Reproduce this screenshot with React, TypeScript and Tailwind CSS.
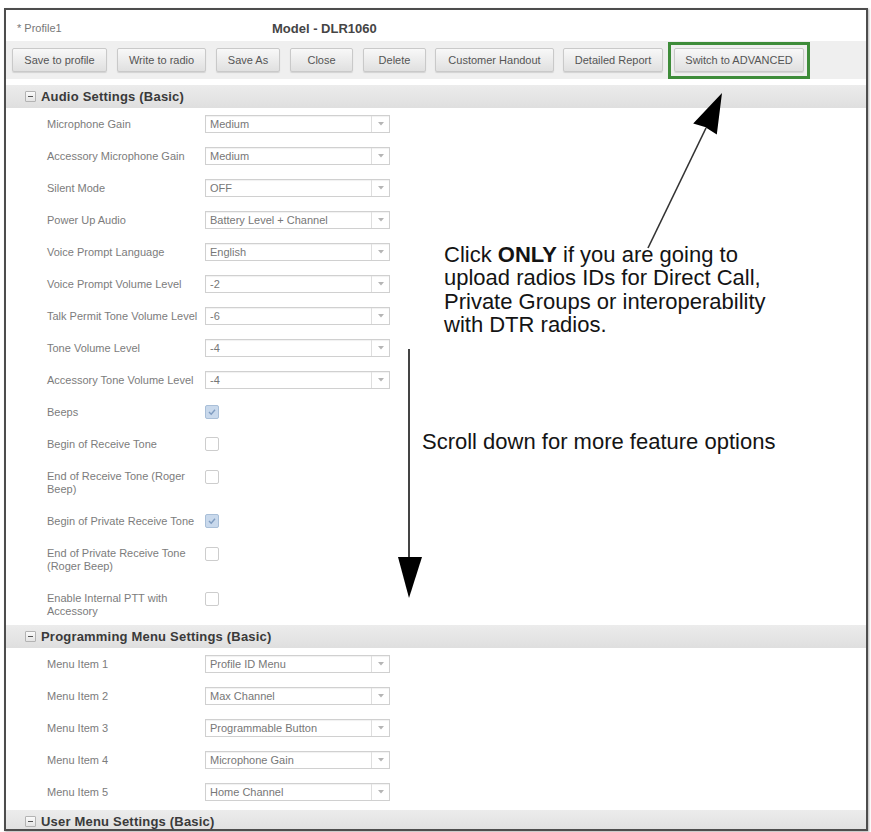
import React from "react";

type BtnProps = { label: string; cls: string };

function Btn({ label, cls }: BtnProps) {
  return (
    <div
      className={
        "h-[24px] flex items-center justify-center whitespace-nowrap border border-[#c9c9c9] rounded-[2px] bg-gradient-to-b from-[#f8f8f8] to-[#e0e0e0] text-[11px] text-[#555] shadow-[0_1px_1px_rgba(0,0,0,0.12)] " +
        cls
      }
    >
      {label}
    </div>
  );
}

function Select({ value }: { value: string }) {
  return (
    <div className="w-[185px] h-[18px] border border-[#d0d0d0] bg-white flex shadow-[inset_0_1px_1px_rgba(0,0,0,0.06)]">
      <div className="flex-1 pl-[4px] text-[11px] leading-[16px] text-[#777] whitespace-nowrap overflow-hidden">
        {value}
      </div>
      <div className="w-[18px] border-l border-[#dedede] flex items-center justify-center">
        <svg width="6" height="4" viewBox="0 0 6 4">
          <path d="M0 0 L6 0 L3 3.5 Z" fill="#b5b5b5" />
        </svg>
      </div>
    </div>
  );
}

function Check({ checked }: { checked?: boolean }) {
  return checked ? (
    <div className="w-[14px] h-[14px] border border-[#a9bfd8] rounded-[2px] bg-[#c9d9ec] flex items-center justify-center">
      <svg width="10" height="10" viewBox="0 0 10 10">
        <path d="M2 5 L4.2 7.2 L8 2.8" stroke="#7f9cc0" strokeWidth="1.4" fill="none" />
      </svg>
    </div>
  ) : (
    <div className="w-[14px] h-[14px] border border-[#cdcdcd] rounded-[2px] bg-white" />
  );
}

function Header({ title }: { title: string }) {
  return (
    <div className="h-[23px] shrink-0 flex items-center pl-[19px] bg-gradient-to-b from-[#ececec] to-[#dfdfdf]">
      <div className="w-[11px] h-[11px] border border-[#b3b3b3] rounded-[1px] bg-gradient-to-b from-[#fafafa] to-[#e4e4e4] flex items-center justify-center">
        <div className="w-[5px] h-[1.5px] bg-[#555]" />
      </div>
      <div className="ml-[5px] text-[13px] font-bold text-[#3a3a3a] tracking-[0.2px] whitespace-nowrap">
        {title}
      </div>
    </div>
  );
}

function SelectRow({ label, value }: { label: string; value: string }) {
  return (
    <div className="h-[32px] shrink-0 flex items-center pl-[41px]">
      <div className="w-[158px] text-[11px] leading-[13px] text-[#7c7c7c] whitespace-nowrap">{label}</div>
      <Select value={value} />
    </div>
  );
}

function CheckRow({ label, checked, h }: { label: string; checked?: boolean; h: string }) {
  const two = h !== "h-[32px]";
  return (
    <div
      className={
        "shrink-0 flex pl-[41px] " + h + (two ? " items-start pt-[10px]" : " items-center")
      }
    >
      <div className="w-[158px] pr-[4px] text-[11px] leading-[13px] text-[#7c7c7c]">{label}</div>
      <Check checked={checked} />
    </div>
  );
}

const audio: [string, string][] = [
  ["Microphone Gain", "Medium"],
  ["Accessory Microphone Gain", "Medium"],
  ["Silent Mode", "OFF"],
  ["Power Up Audio", "Battery Level + Channel"],
  ["Voice Prompt Language", "English"],
  ["Voice Prompt Volume Level", "-2"],
  ["Talk Permit Tone Volume Level", "-6"],
  ["Tone Volume Level", "-4"],
  ["Accessory Tone Volume Level", "-4"],
];

const menu: [string, string][] = [
  ["Menu Item 1", "Profile ID Menu"],
  ["Menu Item 2", "Max Channel"],
  ["Menu Item 3", "Programmable Button"],
  ["Menu Item 4", "Microphone Gain"],
  ["Menu Item 5", "Home Channel"],
];

export default function App() {
  return (
    <div className="relative w-[871px] h-[832px] bg-white overflow-hidden font-['Liberation_Sans',Arial,sans-serif]">
      <div className="pt-[8px] pl-[4px]">
        <div className="w-[864px] h-[823px] border-2 border-[#4d4d4d] overflow-hidden flex flex-col bg-white shadow-[1px_1px_2px_rgba(0,0,0,0.3)]">
          {/* title */}
          <div className="h-[31px] shrink-0 pt-[6px] pl-[11px] flex items-center">
            <div className="w-[255px] text-[11px] text-[#777]">* Profile1</div>
            <div className="text-[13px] font-bold text-[#454545]">Model - DLR1060</div>
          </div>
          {/* toolbar */}
          <div className="h-[38px] shrink-0 bg-[#efefef] flex items-center pl-[6px]">
            <Btn label="Save to profile" cls="w-[95px]" />
            <Btn label="Write to radio" cls="w-[89px] ml-[10px]" />
            <Btn label="Save As" cls="w-[64px] ml-[10px]" />
            <Btn label="Close" cls="w-[63px] ml-[10px]" />
            <Btn label="Delete" cls="w-[63px] ml-[10px]" />
            <Btn label="Customer Handout" cls="w-[119px] ml-[9px]" />
            <Btn label="Detailed Report" cls="w-[100px] ml-[9px]" />
            <div className="ml-[5px] w-[142px] h-[37px] border-[3px] border-[#3e8c3a] flex items-center justify-center">
              <Btn label="Switch to ADVANCED" cls="w-[130px]" />
            </div>
          </div>
          <div className="h-[6px] shrink-0" />
          <Header title="Audio Settings (Basic)" />
          {audio.map(([l, v]) => (
            <SelectRow key={l} label={l} value={v} />
          ))}
          <CheckRow label="Beeps" checked h="h-[32px]" />
          <CheckRow label="Begin of Receive Tone" h="h-[32px]" />
          <CheckRow label="End of Receive Tone (Roger Beep)" h="h-[45px]" />
          <CheckRow label="Begin of Private Receive Tone" checked h="h-[32px]" />
          <CheckRow label="End of Private Receive Tone (Roger Beep)" h="h-[45px]" />
          <CheckRow label="Enable Internal PTT with Accessory" h="h-[43px]" />
          <Header title="Programming Menu Settings (Basic)" />
          {menu.map(([l, v]) => (
            <SelectRow key={l} label={l} value={v} />
          ))}
          <div className="h-[2px] shrink-0" />
          <Header title="User Menu Settings (Basic)" />
        </div>
      </div>

      {/* annotations */}
      <div className="absolute left-[444px] top-[243px] text-[22px] leading-[23.4px] text-[#141414] whitespace-nowrap">
        Click <span className="font-bold">ONLY</span> if you are going to
        <br />
        upload radios IDs for Direct Call,
        <br />
        Private Groups or interoperability
        <br />
        with DTR radios.
      </div>
      <div className="absolute left-[422px] top-[430px] text-[22px] leading-[24px] text-[#141414] whitespace-nowrap">
        Scroll down for more feature options
      </div>
      <svg
        className="absolute left-0 top-0 pointer-events-none"
        width="871"
        height="832"
        viewBox="0 0 871 832"
      >
        <line x1="648" y1="248" x2="706" y2="128" stroke="#333" strokeWidth="1.6" />
        <path d="M722 93 L716.8 134.5 L705 127 L693.2 123.5 Z" fill="#000" />
        <line x1="409" y1="349" x2="409" y2="560" stroke="#444" strokeWidth="2" />
        <path d="M398 557 L422 557 L409 598 Z" fill="#000" />
      </svg>
    </div>
  );
}
